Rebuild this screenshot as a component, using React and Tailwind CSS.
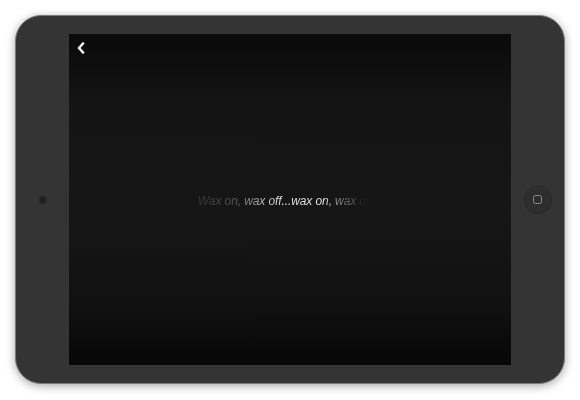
import React from "react";

const BackChevron = () => (
  <svg width="10" height="12" viewBox="0 0 10 12" fill="none">
    <path d="M7 1.5 L3 6 L7 10.5" stroke="#f2f2f2" strokeWidth="2.4" strokeLinecap="square" />
  </svg>
);

export default function App() {
  return (
    <div className="w-[580px] h-[400px] bg-white px-[15px] pt-[15px] font-['Liberation_Sans',Arial,sans-serif]">
      <div className="flex items-center w-[550px] h-[369px] rounded-[26px] bg-[#343434] border border-[#7a7a7a] shadow-[0_2px_10px_rgba(0,0,0,0.35)]">
        <div className="w-[53px] flex justify-center">
          <div className="w-[6px] h-[6px] rounded-full bg-[#1e1e1e] shadow-[0_0_2px_1px_rgba(0,0,0,0.25)]" />
        </div>
        <div className="w-[442px] h-[331px] flex flex-col bg-[linear-gradient(to_bottom,#0a0a0a_0%,#141414_20%,#161616_55%,#111111_82%,#070707_100%)]">
          <div className="h-[26px] pl-[7px] pt-[8px]">
            <BackChevron />
          </div>
          <div className="flex-1 flex items-center justify-center pb-[24px]">
            <span className="italic text-[12px] tracking-[-0.1px] bg-clip-text text-transparent bg-[linear-gradient(to_right,#333_0%,#555_20%,#9a9a9a_30%,#e8e8e8_45%,#eeeeee_68%,#888888_76%,#555555_84%,#262626_89%,#161616_94%)]">
              Wax on, wax off...wax on, wax off...
            </span>
          </div>
        </div>
        <div className="w-[53px] flex justify-center">
          <div className="w-[28px] h-[28px] rounded-full bg-[#2e2e2e] border border-[#262626] shadow-[inset_0_1px_1px_rgba(255,255,255,0.05)] flex items-center justify-center">
            <div className="w-[9px] h-[9px] rounded-[2.5px] border-[1.5px] border-[#8a8a8a]" />
          </div>
        </div>
      </div>
    </div>
  );
}
